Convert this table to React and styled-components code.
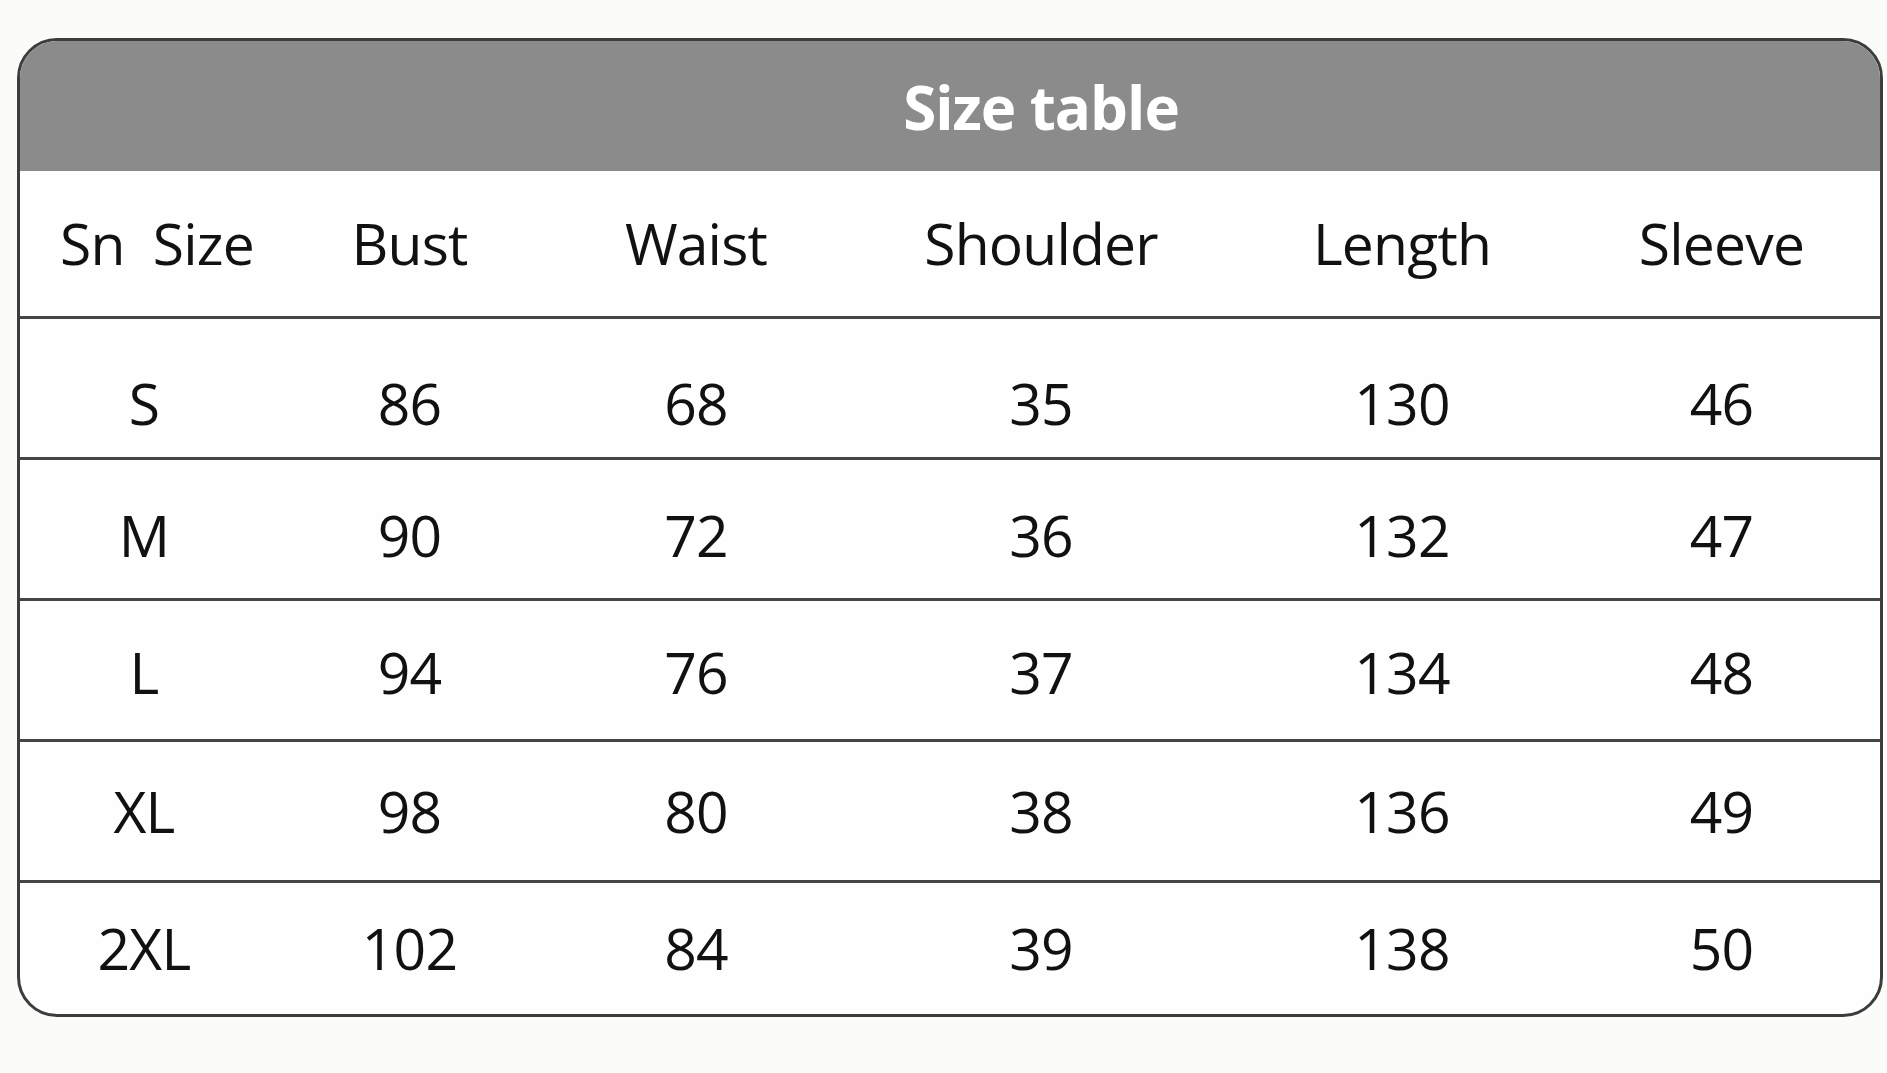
import React from 'react';
import styled, { createGlobalStyle } from 'styled-components';

const GlobalStyle = createGlobalStyle`
  html, body {
    margin: 0;
    padding: 0;
    background: #fbfbf9;
  }
  * {
    box-sizing: border-box;
  }
`;

const COLUMNS = '248fr 283fr 290fr 400fr 322fr 317fr';

const headers = ['Sn  Size', 'Bust', 'Waist', 'Shoulder', 'Length', 'Sleeve'];

// size, bust, waist, shoulder, length, sleeve
const rows = [
  { height: 141, drop: 30, values: ['S', 86, 68, 35, 130, 46] },
  { height: 141, drop: 12, values: ['M', 90, 72, 36, 132, 47] },
  { height: 141, drop: 4, values: ['L', 94, 76, 37, 134, 48] },
  { height: 141, drop: 0, values: ['XL', 98, 80, 38, 136, 49] },
  { height: 131, drop: 0, values: ['2XL', 102, 84, 39, 138, 50] },
];

const Page = styled.div`
  padding: 38px 4px 60px 17px;
  font-family: 'Open Sans', 'Noto Sans', sans-serif;
`;

const Card = styled.div`
  width: 1866px;
  border: 3px solid #3c3c3c;
  border-radius: 40px;
  overflow: hidden;
  background: #fefefe;
`;

const TitleBar = styled.div`
  display: grid;
  grid-template-columns: ${COLUMNS};
  height: 130px;
  align-items: center;
  background: #8b8b8b;
`;

const Title = styled.div`
  grid-column: 4;
  text-align: center;
  color: #ffffff;
  font-weight: 700;
  font-size: 60px;
  letter-spacing: -1px;
  line-height: 1;
  padding-top: 2px;
`;

const Row = styled.div`
  display: grid;
  grid-template-columns: ${COLUMNS};
  height: ${(p) => p.$height}px;
  border-bottom: ${(p) => (p.$last ? 'none' : '3px solid #454545')};
`;

const Cell = styled.div`
  display: flex;
  align-items: center;
  justify-content: center;
  padding-left: ${(p) => p.$shift || 0}px;
  padding-top: ${(p) => p.$drop || 0}px;
  color: #111111;
  font-size: 57px;
  letter-spacing: -0.8px;
  line-height: 1;
  white-space: pre;
`;

export default function App() {
  return (
    <Page>
      <GlobalStyle />
      <Card>
        <TitleBar>
          <Title>Size table</Title>
        </TitleBar>
        <Row $height={148}>
          {headers.map((h, i) => (
            <Cell key={h} $shift={i === 0 ? 26 : 0}>
              {h}
            </Cell>
          ))}
        </Row>
        {rows.map((r, ri) => (
          <Row key={r.values[0]} $height={r.height} $last={ri === rows.length - 1}>
            {r.values.map((v, ci) => (
              <Cell key={ci} $drop={r.drop}>
                {v}
              </Cell>
            ))}
          </Row>
        ))}
      </Card>
    </Page>
  );
}
